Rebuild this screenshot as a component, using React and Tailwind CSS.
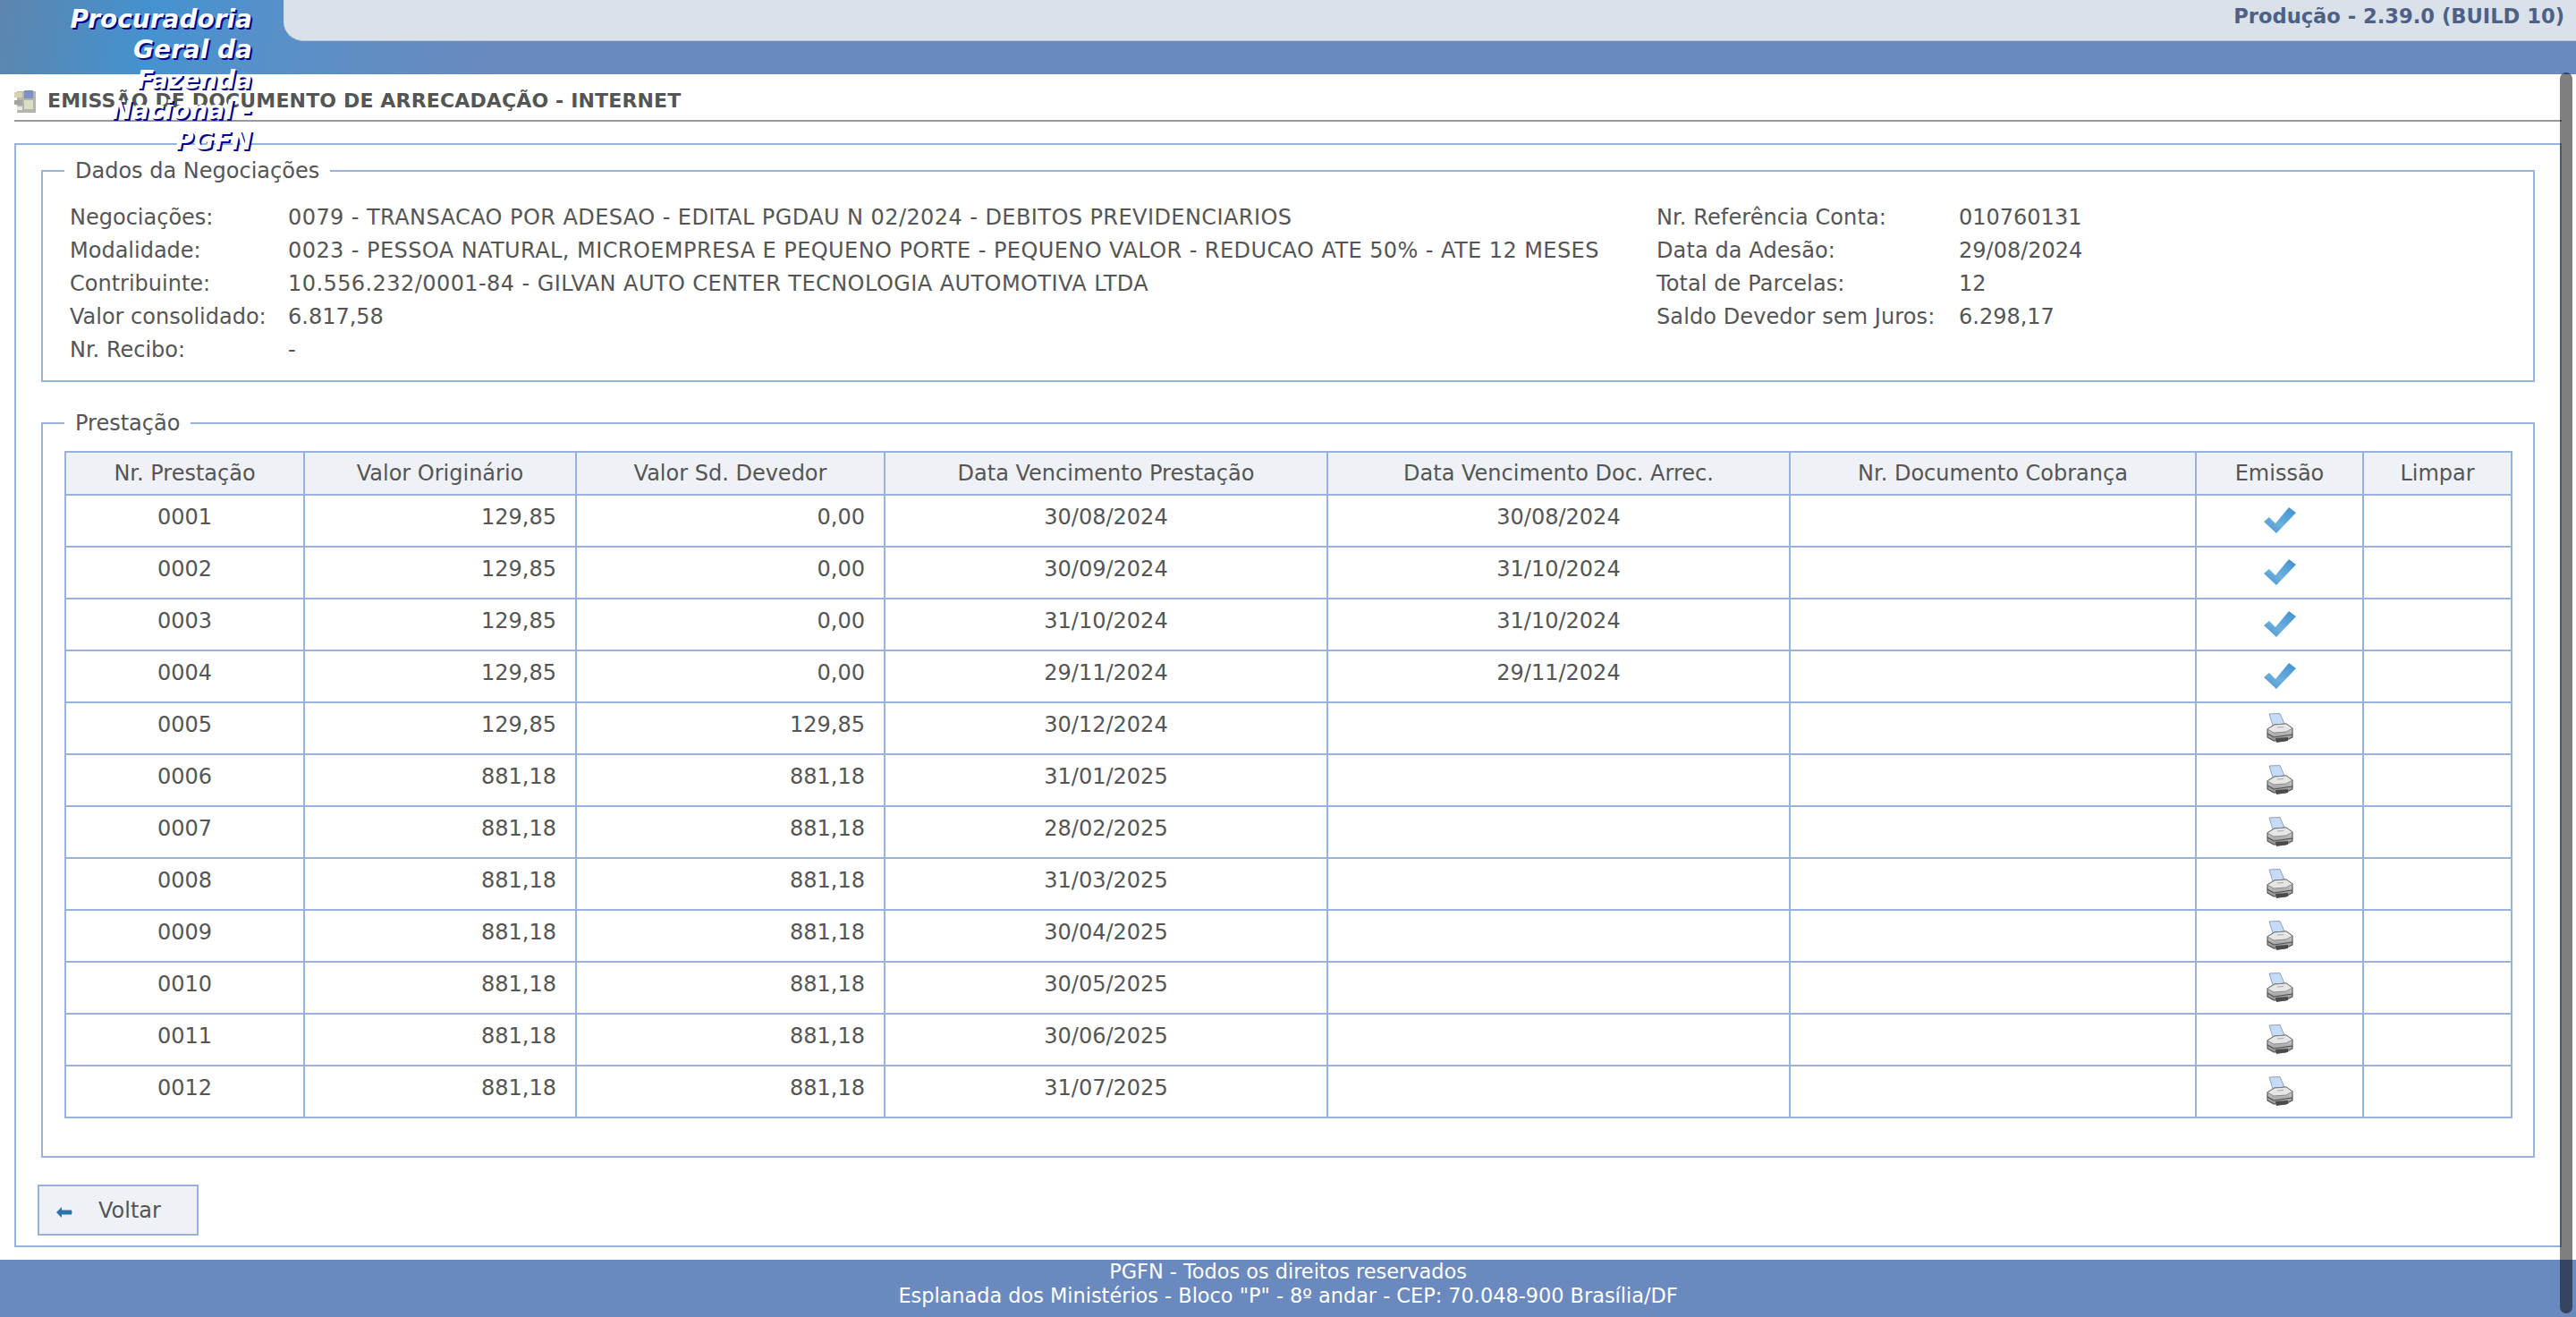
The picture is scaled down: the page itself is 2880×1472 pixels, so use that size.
const rows = [
  ['0001', '129,85', '0,00', '30/08/2024', '30/08/2024', true],
  ['0002', '129,85', '0,00', '30/09/2024', '31/10/2024', true],
  ['0003', '129,85', '0,00', '31/10/2024', '31/10/2024', true],
  ['0004', '129,85', '0,00', '29/11/2024', '29/11/2024', true],
  ['0005', '129,85', '129,85', '30/12/2024', '', false],
  ['0006', '881,18', '881,18', '31/01/2025', '', false],
  ['0007', '881,18', '881,18', '28/02/2025', '', false],
  ['0008', '881,18', '881,18', '31/03/2025', '', false],
  ['0009', '881,18', '881,18', '30/04/2025', '', false],
  ['0010', '881,18', '881,18', '30/05/2025', '', false],
  ['0011', '881,18', '881,18', '30/06/2025', '', false],
  ['0012', '881,18', '881,18', '31/07/2025', '', false],
]

const headers = [
  'Nr. Prestação',
  'Valor Originário',
  'Valor Sd. Devedor',
  'Data Vencimento Prestação',
  'Data Vencimento Doc. Arrec.',
  'Nr. Documento Cobrança',
  'Emissão',
  'Limpar',
]

const info = [
  ['Negociações:', '0079 - TRANSACAO POR ADESAO - EDITAL PGDAU N 02/2024 - DEBITOS PREVIDENCIARIOS', 'Nr. Referência Conta:', '010760131'],
  ['Modalidade:', '0023 - PESSOA NATURAL, MICROEMPRESA E PEQUENO PORTE - PEQUENO VALOR - REDUCAO ATE 50% - ATE 12 MESES', 'Data da Adesão:', '29/08/2024'],
  ['Contribuinte:', '10.556.232/0001-84 - GILVAN AUTO CENTER TECNOLOGIA AUTOMOTIVA LTDA', 'Total de Parcelas:', '12'],
  ['Valor consolidado:', '6.817,58', 'Saldo Devedor sem Juros:', '6.298,17'],
  ['Nr. Recibo:', '-', '', ''],
]

function CheckIcon() {
  return (
    <svg width="36" height="30" viewBox="0 0 36 30" className="mx-auto block">
      <defs>
        <linearGradient id="chk" x1="1" y1="0" x2="0" y2="1">
          <stop offset="0" stopColor="#3f90cf" />
          <stop offset="0.6" stopColor="#6cb0de" />
          <stop offset="1" stopColor="#4a8fc6" />
        </linearGradient>
      </defs>
      <polygon points="0,16 6,11 13,18 28,0 36,6 14,29" fill="url(#chk)" />
    </svg>
  )
}

function PrinterIcon() {
  return (
    <svg width="30" height="34" viewBox="0 0 30 34" className="mx-auto block">
      <defs>
        <linearGradient id="prt" x1="0" y1="0" x2="0" y2="1">
          <stop offset="0" stopColor="#e4e4e4" />
          <stop offset="1" stopColor="#8f8f8f" />
        </linearGradient>
      </defs>
      <polygon points="3,1 15,0.5 20,12 7,14" fill="#c6dbf8" stroke="#8d99a8" strokeWidth="0.9" />
      <path d="M1 18 L9 13 L22 12 L29 17 L29 27 L21 31 L8 31 L1 27 Z" fill="url(#prt)" stroke="#4f4f4f" strokeWidth="1.1" />
      <path d="M1 18 L8 22 L22 21 L29 17 L22 12 L9 13 Z" fill="#e6e6e6" stroke="#777777" strokeWidth="0.8" />
      <path d="M1 23 L8 27 L29 24" fill="none" stroke="#4f4f4f" strokeWidth="1.1" />
      <path d="M10 28 L24 27 L24 31 L11 33 Z" fill="#4a4a4a" />
      <path d="M12 16 L19 15.5" stroke="#a8a8a8" strokeWidth="1" />
    </svg>
  )
}

function TitleIcon() {
  return (
    <svg width="24" height="26" viewBox="0 0 24 26" className="shrink-0">
      <rect x="3" y="2" width="21" height="24" fill="#b5b5b0" />
      <rect x="0" y="3" width="9" height="6" fill="#d8d4b0" />
      <rect x="11" y="1" width="10" height="9" fill="#7b93c2" />
      <rect x="0" y="12" width="9" height="5" fill="#a3a39d" />
      <rect x="11" y="12" width="10" height="10" fill="#d9dfc4" />
      <rect x="3" y="19" width="6" height="4" fill="#e8e8e2" />
    </svg>
  )
}

function Fieldset({ title, className, children }) {
  return (
    <fieldset className={'mx-[28px] border-2 border-[#98b2da] ' + className}>
      <legend className="ml-[24px] px-[12px] text-[24px] leading-[28px]">{title}</legend>
      {children}
    </fieldset>
  )
}

export default function App() {
  return (
    <div className="relative flex h-screen flex-col overflow-hidden bg-white font-['DejaVu_Sans',Verdana,sans-serif] text-[#555555]">
      <header className="relative h-[83px] shrink-0 bg-[linear-gradient(100deg,#5d85ad_0px,#4492cf_170px,#5a90c8_320px,#6a8abf_560px)]">
        <div className="ml-[317px] flex h-[46px] justify-end rounded-bl-[22px] border-b border-[#b9c4d4] bg-[#dae1e8] pr-[13px]">
          <span className="text-[22.6px] font-bold leading-[36px] text-[#4d6188]">Produção - 2.39.0 (BUILD 10)</span>
        </div>
      </header>

      <div className="absolute left-[38px] top-[5px] z-10 w-[244px] text-right text-[28px] font-bold italic leading-[34px] text-white [text-shadow:2px_2px_0_#00008b]">
        Procuradoria Geral da Fazenda Nacional - PGFN
      </div>

      <main className="min-h-0 flex-1 pl-[16px] pr-[16px]">
        <div className="flex h-[53px] items-center gap-[13px] border-b-2 border-[#999999] pt-[8px]">
          <TitleIcon />
          <h1 className="text-[22px] font-bold leading-none tracking-[0.15px]">EMISSÃO DE DOCUMENTO DE ARRECADAÇÃO - INTERNET</h1>
        </div>

        <div className="mt-[24px] h-[1234px] border-2 border-[#98b2da] pt-[15px]">
          <Fieldset title="Dados da Negociações" className="h-[250px]">
            <div className="grid grid-cols-[244px_1530px_338px_1fr] pl-[30px] pt-[20px] text-[24px] leading-[37px]">
              {info.map((r) => (
                <div key={r[0]} className="contents">
                  <span>{r[0]}</span>
                  <span className={r[1].length > 10 ? 'tracking-[0.43px]' : ''}>{r[1]}</span>
                  <span className="tracking-[0.1px]">{r[2]}</span>
                  <span>{r[3]}</span>
                </div>
              ))}
            </div>
          </Fieldset>

          <Fieldset title="Prestação" className="mt-[32px] h-[835px]">
            <div className="pl-[24px] pt-[17px]">
              <table className="w-[2735px] table-fixed border-collapse text-[24px]">
                <colgroup>
                  <col className="w-[267px]" />
                  <col className="w-[304px]" />
                  <col className="w-[345px]" />
                  <col className="w-[495px]" />
                  <col className="w-[517px]" />
                  <col className="w-[454px]" />
                  <col className="w-[187px]" />
                  <col className="w-[166px]" />
                </colgroup>
                <thead>
                  <tr>
                    {headers.map((h) => (
                      <th key={h} className="h-[48px] border-2 border-[#98b2da] bg-[#eef1f6] p-0 text-center font-normal">{h}</th>
                    ))}
                  </tr>
                </thead>
                <tbody>
                  {rows.map((r) => (
                    <tr key={r[0]}>
                      <td className="h-[58px] border-2 border-[#98b2da] pb-[8px] text-center">{r[0]}</td>
                      <td className="border-2 border-[#98b2da] pb-[8px] pr-[21px] text-right">{r[1]}</td>
                      <td className="border-2 border-[#98b2da] pb-[8px] pr-[21px] text-right">{r[2]}</td>
                      <td className="border-2 border-[#98b2da] pb-[8px] text-center">{r[3]}</td>
                      <td className="border-2 border-[#98b2da] pb-[8px] text-center">{r[4]}</td>
                      <td className="border-2 border-[#98b2da]"></td>
                      <td className="border-2 border-[#98b2da]">{r[5] ? <CheckIcon /> : <PrinterIcon />}</td>
                      <td className="border-2 border-[#98b2da]"></td>
                    </tr>
                  ))}
                </tbody>
              </table>
            </div>
          </Fieldset>

          <button type="button" className="ml-[24px] mt-[30px] flex h-[57px] w-[180px] items-center border-2 border-[#98b2da] bg-[#eef1f6] pl-[19px] text-[24px]">
            <svg width="18" height="12" viewBox="0 0 18 12" className="mt-[4px]">
              <path d="M0 6 L6 0 L6 3.5 L17 3.5 Q18 6 17 8.5 L6 8.5 L6 12 Z" fill="#2e74a8" />
            </svg>
            <span className="ml-[29px]">Voltar</span>
          </button>
        </div>
      </main>

      <footer className="flex h-[64px] shrink-0 flex-col items-center bg-[#6a8abf] text-[22.4px] leading-[27px] text-white">
        <span>PGFN - Todos os direitos reservados</span>
        <span>Esplanada dos Ministérios - Bloco "P" - 8º andar - CEP: 70.048-900 Brasília/DF</span>
      </footer>

      <div className="absolute bottom-[4px] right-[4px] top-[81px] z-20 w-[14px] rounded-full bg-black/50" />
    </div>
  )
}
